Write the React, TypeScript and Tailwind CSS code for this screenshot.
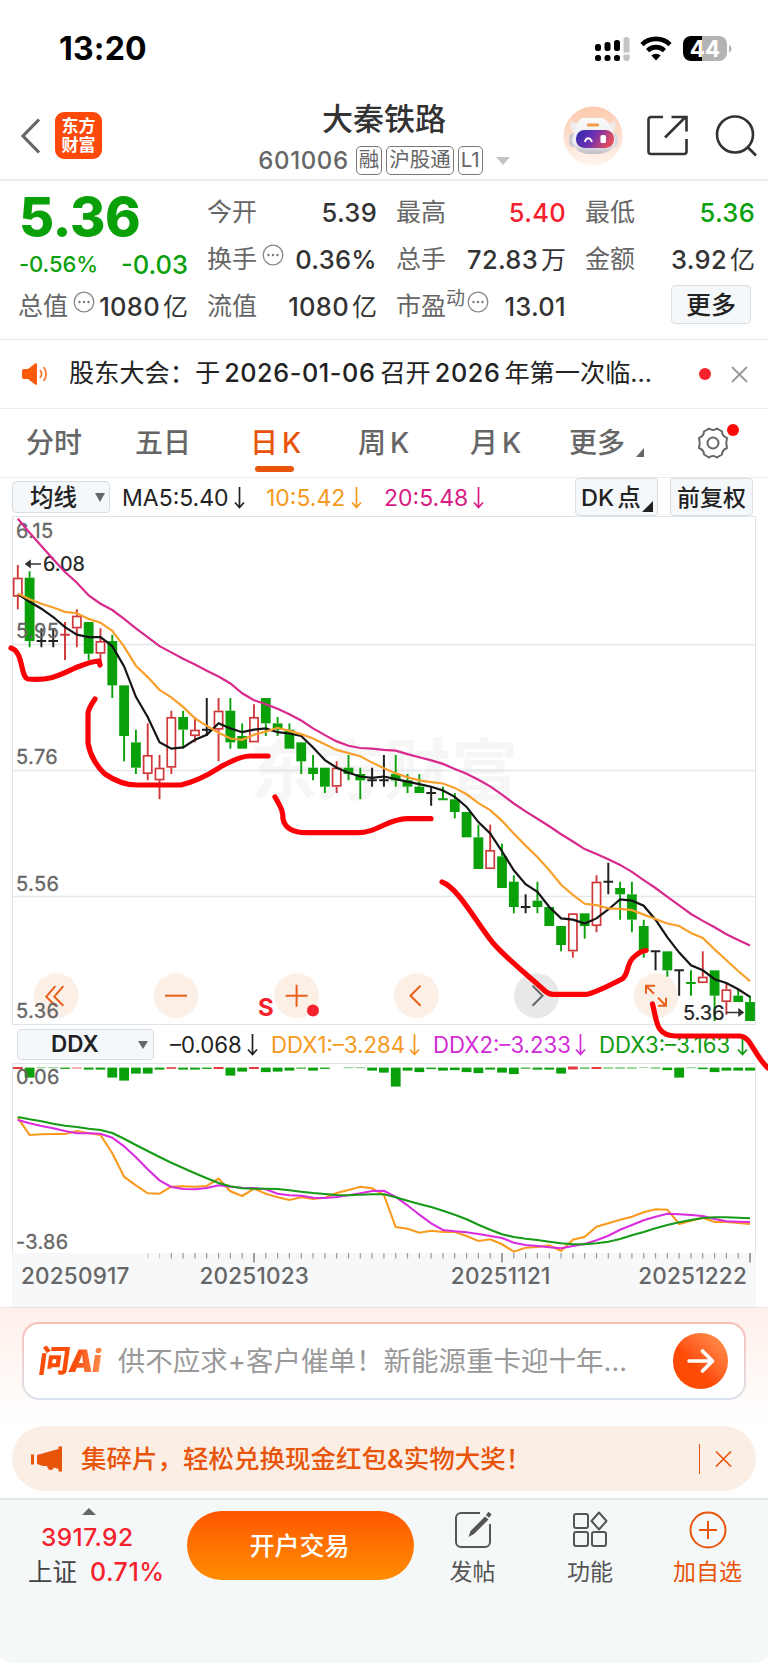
import type { ReactNode } from "react";

// ---------------------------------------------------------------------------
// Data
// ---------------------------------------------------------------------------

type Kind = "up" | "down" | "flat";

// [high, low, body top, body bottom, kind], prices in cents
const CANDLES: [number, number, number, number, Kind][] = [
  [608, 601, 606, 603, "up"], [607, 595, 606, 596, "down"], [598, 595, 596, 596, "flat"],
  [598, 595, 596, 596, "flat"], [599, 593, 597, 597, "up"], [601, 595, 600, 598, "up"],
  [599, 593, 599, 594, "down"], [598, 592, 596, 594, "up"], [597, 587, 596, 589, "down"],
  [589, 577, 589, 581, "down"], [582, 575, 580, 576, "down"], [583, 574, 578, 575, "up"],
  [578, 571, 576, 574, "up"], [585, 575, 584, 576, "up"], [585, 579, 584, 582, "down"],
  [584, 580, 582, 581, "up"], [587, 581, 582, 582, "flat"], [587, 577, 585, 582, "up"],
  [587, 579, 585, 580, "down"], [583, 579, 581, 579, "down"], [586, 580, 584, 580, "up"],
  [587, 581, 587, 583, "down"], [584, 581, 583, 582, "down"], [583, 579, 582, 579, "down"],
  [580, 575, 580, 577, "down"], [578, 574, 576, 575, "down"], [576, 572, 576, 573, "down"],
  [577, 572, 576, 573, "up"], [578, 574, 576, 575, "down"], [576, 571, 575, 574, "down"],
  [576, 573, 574, 574, "flat"], [578, 573, 574, 574, "flat"], [578, 573, 575, 574, "down"],
  [575, 572, 574, 573, "down"], [575, 572, 573, 572, "down"], [573, 570, 572, 572, "flat"],
  [573, 571, 571, 571, "down"], [572, 568, 571, 569, "down"], [569, 565, 569, 565, "down"],
  [567, 560, 565, 560, "down"], [567, 560, 563, 560, "up"], [564, 557, 562, 557, "down"],
  [559, 553, 558, 554, "down"], [556, 553, 554, 554, "flat"], [558, 553, 555, 554, "down"],
  [554, 551, 554, 551, "down"], [551, 547, 551, 548, "down"], [553, 546, 553, 547, "up"],
  [553, 549, 553, 551, "down"], [559, 550, 558, 551, "up"], [561, 556, 558, 558, "flat"],
  [558, 552, 557, 556, "down"], [558, 550, 556, 552, "down"], [552, 546, 551, 547, "down"],
  [547, 544, 547, 547, "flat"], [547, 543, 547, 544, "down"], [544, 540, 544, 544, "flat"],
  [544, 540, 542, 542, "down"], [547, 542, 543, 542, "up"], [544, 536, 544, 540, "down"],
  [542, 537, 541, 539, "up"], [541, 539, 540, 539, "down"], [540, 536, 539, 536, "down"],
];

// Averages for the days whose window starts before the first candle
const MA5_SEED = [603.4, 602.2, 601.1, 599.8];
const MA10_SEED = [603.5, 602.6, 601.9, 601.3, 600.6, 600.4, 599.5, 598.9, 597.6];
const MA20_SEED = [
  615.3, 613.1, 611, 608.9, 606.9, 605.2, 603.2, 601.9, 600.9, 599.5,
  598, 596.6, 595.2, 594.2, 593.2, 592.3, 591.3, 590.4, 589.3,
];

// Positive values are drawn red above the base line
const DDX_BARS = [
  2, -10, -0.5, -0.5, -1.3, 0.8, -2, -2, -10, -13, -6, -6, -2, 1.6, -2, -2, -1.3, 2, -8, -4, 2,
  -4.5, -4, -3, -1, -3, -1.3, 0, -0.5, -0.5, -3, -5, -19, -3, -4.5, -1.5, -3, -2.5, -4.5, -5.5, -2,
  -5, -6.5, -1, -2, -2, -6, 3, -1, 2, -0.8, -0.8, -0.8, -0.4, -0.8, -2.5, -10, -0.5, -1.5, -4.5, -3, -3, -3,
];

const DDX1 = [
  113, 165, 163, 162, 162, 153, 160, 165, 220, 290, 316, 340, 341, 320, 319, 320, 318, 296, 334, 348, 326,
  341, 352, 360, 352, 357, 353, 339, 330, 320, 325, 345, 441, 446, 458, 452, 456, 456, 468, 483, 478, 493,
  515, 503, 501, 496, 513, 479, 470, 440, 430, 419, 410, 397, 388, 389, 432, 422, 413, 426, 426, 429, 432,
];
const DDX2 = [
  120, 130, 138, 145, 153, 160, 160, 161, 173, 199, 232, 268, 301, 321, 327, 328, 324, 316, 320, 323, 324,
  328, 341, 346, 347, 353, 354, 351, 346, 340, 333, 332, 351, 376, 404, 430, 450, 454, 457, 462, 468, 474,
  488, 495, 498, 502, 505, 498, 492, 481, 467, 449, 435, 421, 410, 401, 403, 405, 408, 417, 424, 425, 426,
];
const DDX3 = [
  111, 118, 124, 131, 137, 141, 146, 150, 159, 176, 195, 213, 231, 248, 264, 280, 295, 309, 319, 325, 326,
  326, 327, 331, 335, 339, 342, 345, 346, 344, 343, 343, 352, 362, 372, 381, 392, 404, 418, 434, 449, 463,
  471, 476, 480, 485, 490, 493, 493, 490, 485, 477, 466, 456, 445, 435, 427, 420, 414, 412, 412, 413, 415,
];

const COLORS = { up: "#d0393c", down: "#0aa00a", flat: "#222" };

const xAt = (i: number) => 17.8 + i * 11.81;
const yAt = (cents: number) => 505 - (cents - 536) * 6.333;

const closes = CANDLES.map(([, , top, bottom, kind]) => (kind === "up" ? top : bottom));

function average(span: number, seed: number[]) {
  return closes.map((_, i) =>
    i < span - 1 ? seed[i] : closes.slice(i - span + 1, i + 1).reduce((a, b) => a + b, 0) / span,
  );
}

const toPoints = (values: number[], y: (v: number) => number) =>
  values.map((v, i) => `${xAt(i).toFixed(1)},${y(v).toFixed(1)}`).join(" ");

// ---------------------------------------------------------------------------
// Header
// ---------------------------------------------------------------------------

function StatusBar() {
  return (
    <div className="flex h-[98px] items-center justify-between pl-[59px] pr-[36px]">
      <span className="text-[32px] font-bold leading-none tracking-[0.2px] text-black">13:20</span>
      <svg width="137" height="26" viewBox="0 0 137 26">
        {[0, 9.5, 19, 28.5].map((x, i) => (
          <g key={x} fill={i === 3 ? "#c4c4c4" : "#000"}>
            <rect x={x} y={[8, 6, 4, 1][i]} width="6" height={[7, 9, 11, 22][i]} rx="2.5" />
            <rect x={x} y="19" width="6" height="6" rx="2.5" />
          </g>
        ))}
        <path d="M27 16.500h9v2h-9z" fill="#fff" />
        <g fill="none" stroke="#000" strokeWidth="4.6">
          <path d="M47 8.6a20 20 0 0 1 28 0" />
          <path d="M52.6 14.6a12 12 0 0 1 16.8 0" />
        </g>
        <path d="M61 24.5l-4.6-5a6.6 6.6 0 0 1 9.2 0z" />
        <path d="M96 0h11v25H96a8 8 0 0 1-8-8V8a8 8 0 0 1 8-8z" />
        <path d="M107 0h17a8 8 0 0 1 8 8v9a8 8 0 0 1-8 8h-17z" fill="#b3b3b3" />
        <path d="M134 9a4 4 0 0 1 0 7.5z" fill="#b3b3b3" />
        <text x="110" y="20.5" textAnchor="middle" fontSize="22.500" fontWeight="700" fill="#fff">44</text>
      </svg>
    </div>
  );
}

function Robot() {
  return (
    <svg width="60" height="60" viewBox="0 0 60 60">
      <defs>
        <linearGradient id="halo" x1="0" y1="0" x2="0" y2="1">
          <stop offset="0" stopColor="#fdc9ae" />
          <stop offset="1" stopColor="#fff4ee" />
        </linearGradient>
        <linearGradient id="visor" x1="0" y1="0" x2="1" y2="0.3">
          <stop offset="0" stopColor="#2f2aa8" />
          <stop offset="0.5" stopColor="#6a2fb4" />
          <stop offset="1" stopColor="#e04a60" />
        </linearGradient>
        <linearGradient id="shell" x1="0" y1="0" x2="0" y2="1">
          <stop offset="0" stopColor="#fafafa" />
          <stop offset="0.7" stopColor="#ececef" />
          <stop offset="1" stopColor="#bdbdc6" />
        </linearGradient>
      </defs>
      <circle cx="30" cy="30" r="29.5" fill="url(#halo)" />
      <path d="M8 14q2 4 7 3l3 6-6 5q-6-6-4-14zM52 14q-2 4-7 3l-3 6 6 5q6-6 4-14z" fill="#eeeef1" />
      <rect x="6" y="27" width="9" height="14" rx="4.500" fill="#c9c9d1" />
      <rect x="46" y="27" width="9" height="14" rx="4.500" fill="#d9d9df" />
      <path d="M19 12h21q5 2 8 12l4 10q-1 12-14 13.500-8 1-16 0Q11 46 9 34l3-10q2-9 7-12z" fill="url(#shell)" />
      <rect x="24" y="17.500" width="12" height="3" rx="1" fill="#f39a4c" />
      <rect x="13" y="24" width="38" height="18" rx="8.500" fill="url(#visor)" />
      <path d="M22 36c1-5 5-5 7 0" fill="none" stroke="#fff" strokeWidth="2" />
      <rect x="37.500" y="29" width="5.500" height="8" rx="1.500" fill="#fff" />
    </svg>
  );
}

function Tag({ children }: { children: ReactNode }) {
  return (
    <span className="flex h-[29px] items-center rounded-[5px] border border-[#777] px-[2px] text-[20.500px] leading-none text-[#666]">
      {children}
    </span>
  );
}

function Header() {
  return (
    <header className="grid h-[83px] grid-cols-[237px_1fr_237px] border-b-2 border-[#ebebeb]">
      <div className="flex items-center gap-[14px] pb-[6px] pl-[20px]">
        <svg width="21" height="36" viewBox="0 0 21 36" fill="none" stroke="#666" strokeWidth="3.2">
          <path d="M19 1.500L3 18l16 16.500" />
        </svg>
        <div className="flex h-[47px] w-[47px] flex-col items-center justify-center rounded-[9px] bg-[#fd4a0a] text-[17px] font-bold leading-[19px] text-white">
          <span>东方</span>
          <span>财富</span>
        </div>
      </div>
      <div className="flex flex-col items-center pt-[4px]">
        <h1 className="text-[31px] font-medium leading-[34px] text-[#333]">大秦铁路</h1>
        <div className="mt-[10px] flex items-center gap-[4px]">
          <span className="mr-[3px] text-[24px] font-medium leading-none tracking-[0.6px] text-[#666]">601006</span>
          <Tag>融</Tag>
          <Tag>沪股通</Tag>
          <Tag>L1</Tag>
          <svg className="ml-[9px]" width="14" height="8" viewBox="0 0 14 8">
            <path d="M0 0h14L7 8z" fill="#c4c4c4" />
          </svg>
        </div>
      </div>
      <div className="flex items-center justify-end pb-[6px] pr-[11px]">
        <Robot />
        <svg className="ml-[24px]" width="41" height="41" viewBox="0 0 41 41" fill="none" stroke="#333" strokeWidth="2.600">
          <path d="M16 2H4a2.500 2.500 0 0 0-2.500 2.500v32A2.500 2.500 0 0 0 4 39h33a2.500 2.500 0 0 0 2.500-2.500V24" />
          <path d="M18 22.500L39 1.500M24.500 2h15v14.500" />
        </svg>
        <svg className="ml-[27px]" width="42" height="42" viewBox="0 0 42 42" fill="none" stroke="#333" strokeWidth="2.600">
          <circle cx="20" cy="19.500" r="18" />
          <path d="M32.500 32l8.500 8.500" />
        </svg>
      </div>
    </header>
  );
}

// ---------------------------------------------------------------------------
// Quote
// ---------------------------------------------------------------------------

function Dots() {
  return (
    <svg className="shrink-0 -translate-y-[5px]" width="22" height="22" viewBox="0 0 22 22">
      <circle cx="11" cy="11" r="9.800" fill="none" stroke="#888" strokeWidth="1.300" />
      <g fill="#777">
        <circle cx="6.500" cy="11" r="1.200" />
        <circle cx="11" cy="11" r="1.200" />
        <circle cx="15.500" cy="11" r="1.200" />
      </g>
    </svg>
  );
}

interface StatProps {
  label: string;
  value: string;
  unit?: string;
  color?: string;
  hint?: ReactNode;
}

function Stat({ label, value, unit, color = "text-[#333]", hint }: StatProps) {
  return (
    <div className="flex h-[47px] items-center whitespace-nowrap text-[25px] leading-none">
      <span className="-ml-px text-[#666]">{label}</span>
      {hint}
      <span className={`ml-auto text-[25.500px] font-medium ${color}`}>
        <span className="tracking-[0.300px]">{value}</span>
        {unit && <span className="ml-[3px] text-[25px] font-normal">{unit}</span>}
      </span>
    </div>
  );
}

function Quote() {
  return (
    <section className="grid h-[159px] grid-cols-4 gap-x-[20px] border-b border-[#e8e8e8] pl-[19px] pr-[13px] pt-[8px]">
      <div className="text-[#0aa00a]">
        <div className="flex h-[55px] items-center text-[54px] font-extrabold leading-none tracking-[-0.500px]">5.36</div>
        <div className="flex h-[39px] items-center justify-between leading-none">
          <span className="text-[22px] font-medium tracking-[-0.100px]">-0.56%</span>
          <span className="mt-[3px] text-[25.500px] font-medium">-0.03</span>
        </div>
        <Stat label="总值" value="1080" unit="亿" hint={<span className="ml-[5px]"><Dots /></span>} />
      </div>
      <div>
        <Stat label="今开" value="5.39" />
        <Stat label="换手" value="0.36%" hint={<span className="ml-[5px]"><Dots /></span>} />
        <Stat label="流值" value="1080" unit="亿" />
      </div>
      <div>
        <Stat label="最高" value="5.40" color="text-[#f5222d]" />
        <Stat label="总手" value="72.83" unit="万" />
        <Stat
          label="市盈"
          value="13.01"
          hint={
            <>
              <span className="-mt-[16px] text-[19px] text-[#666]">动</span>
              <span className="ml-[2px]"><Dots /></span>
            </>
          }
        />
      </div>
      <div>
        <Stat label="最低" value="5.36" color="text-[#0aa00a]" />
        <Stat label="金额" value="3.92" unit="亿" />
        <button className="ml-auto mr-[4px] mt-[2px] flex h-[39px] w-[80px] items-center justify-center rounded-[4px] border border-[#d9dee2] bg-[#f5f8fa] pt-[2px] text-[25px] font-medium leading-none text-[#222]">
          更多
        </button>
      </div>
    </section>
  );
}

function Notice() {
  return (
    <section className="flex h-[69px] items-center whitespace-nowrap border-b border-[#ececec] pl-[21px] pr-[20px]">
      <svg width="28" height="24" viewBox="0 0 28 24" fill="#fa5a0a">
        <path d="M3 7h4l7-5.500c1-.6 2-.2 2 1v19c0 1.200-1 1.600-2 1L7 17H3c-1.300 0-2-.7-2-2V9c0-1.300.7-2 2-2z" />
        <path d="M19 8c2 2.500 2 5.500 0 8M22.500 5c3.500 4 3.500 10 0 14" fill="none" stroke="#fa7a3a" strokeWidth="1.800" />
      </svg>
      <p className="ml-[20px] text-[25.200px] leading-none text-[#222]">
        股东大会：于<b className="ml-[4px] mr-[5px] font-medium tracking-[0.600px]">2026-01-06</b>召开
        <b className="ml-[4px] mr-[4px] font-medium tracking-[0.600px]">2026</b>年第一次临...
      </p>
      <span className="ml-auto h-[12px] w-[12px] rounded-full bg-[#f5222d]" />
      <svg className="ml-[20px]" width="17" height="17" viewBox="0 0 17 17" stroke="#999" strokeWidth="1.800">
        <path d="M1 1l15 15M16 1L1 16" />
      </svg>
    </section>
  );
}

// ---------------------------------------------------------------------------
// Tabs
// ---------------------------------------------------------------------------

function Tabs() {
  return (
    <nav className="flex h-[69px] items-center whitespace-nowrap border-b border-[#ececec] pl-[26px] text-[28px] font-medium leading-none text-[#666]">
      <span className="w-[109px]">分时</span>
      <span className="w-[115px]">五日</span>
      <span className="relative w-[108px] text-[#e8550a]">
        日<span className="ml-[4px]">K</span>
        <i className="absolute left-[5px] top-[37px] h-[6px] w-[39px] rounded-full bg-[#e8550a]" />
      </span>
      <span className="w-[112px]">周<span className="ml-[4px]">K</span></span>
      <span className="w-[99px]">月<span className="ml-[4px]">K</span></span>
      <span>更多</span>
      <svg className="ml-[11px] mt-[18px]" width="8" height="9" viewBox="0 0 8 9">
        <path d="M8 0v9H0z" fill="#666" />
      </svg>
      <span className="relative ml-[52px]">
        <svg width="34" height="34" viewBox="0 0 34 34" fill="none" stroke="#666" strokeWidth="2">
          <path d="M13 2.500Q17 5.500 21 2.500L26 5.500Q26 10 31 12Q29.500 17 31 22Q26 24 26 28.500L21 31.500Q17 28.500 13 31.500L8 28.500Q8 24 3 22Q4.500 17 3 12Q8 10 8 5.500Z" strokeLinejoin="round" />
          <circle cx="17" cy="17" r="5.500" />
        </svg>
        <i className="absolute -top-[2px] left-[31px] h-[12px] w-[12px] rounded-full bg-[#fb0a0a]" />
      </span>
    </nav>
  );
}

// ---------------------------------------------------------------------------
// Charts
// ---------------------------------------------------------------------------

function DownArrow() {
  return (
    <svg width="11" height="22" viewBox="0 0 11 22" fill="none" stroke="currentColor" strokeWidth="1.700">
      <path d="M5.500 0v20M1 15.500l4.500 5 4.500-5" />
    </svg>
  );
}

function Reading({ text, className }: { text: string; className: string }) {
  return (
    <span className={`flex items-center justify-between pt-[2px] leading-none ${className}`}>
      {text}
      <DownArrow />
    </span>
  );
}

function AverageBar() {
  return (
    <div className="flex h-[38px] items-center whitespace-nowrap pl-[12px] pr-[15px] text-[23.500px]">
      <button className="flex h-[32px] w-[98px] items-center rounded-[4px] border border-[#d9dee2] bg-[#f5f8fa] pl-[17px] pt-[2px] font-medium leading-none text-[#222]">
        均线
        <svg className="-mt-[2px] ml-[18px]" width="10" height="9" viewBox="0 0 10 9">
          <path d="M0 0h10L5 9z" fill="#666" />
        </svg>
      </button>
      <Reading className="ml-[12px] w-[123px] text-[23px] text-[#222]" text="MA5:5.40" />
      <Reading className="ml-[21px] w-[96px] text-[23px] text-[#f5991f]" text="10:5.42" />
      <Reading className="ml-[22px] w-[100px] text-[23px] text-[#d81b84]" text="20:5.48" />
      <button className="relative ml-auto flex h-[38px] w-[83px] items-center rounded-[4px] border border-[#d9dee2] bg-[#f5f8fa] pl-[5px] pt-[2px] font-medium leading-none text-[#222]">
        DK<span className="ml-[3px]">点</span>
        <svg className="absolute bottom-[3px] right-[4px]" width="11" height="11" viewBox="0 0 11 11">
          <path d="M11 0v11H0z" fill="#222" />
        </svg>
      </button>
      <button className="ml-[12px] h-[38px] w-[83px] rounded-[4px] border border-[#d9dee2] bg-[#f5f8fa] pt-[2px] text-[23px] font-medium leading-none text-[#222]">
        前复权
      </button>
    </div>
  );
}

function Candle({ index }: { index: number }) {
  const [high, low, top, bottom, kind] = CANDLES[index];
  const x = xAt(index);
  const color = COLORS[kind];
  if (top === bottom) {
    return (
      <path
        d={`M${x} ${yAt(high)}V${yAt(low)}M${x - 4.800} ${yAt(top)}h9.600`}
        stroke={color}
        strokeWidth="2"
      />
    );
  }
  const inset = kind === "up" ? 0.8 : 0;
  return (
    <g stroke={color} strokeWidth="1.900">
      <path d={`M${x} ${yAt(high)}V${yAt(top)}M${x} ${yAt(bottom)}V${yAt(low)}`} />
      <rect
        x={x - 4.900 + inset}
        y={yAt(top) + inset}
        width={9.800 - inset * 2}
        height={yAt(bottom) - yAt(top) - inset * 2}
        strokeWidth={kind === "up" ? 1.700 : 0}
        fill={kind === "up" ? "#fff" : color}
      />
    </g>
  );
}

function RoundButton({ x, gray, children }: { x: number; gray?: boolean; children: ReactNode }) {
  return (
    <g transform={`translate(${x} 479.700)`}>
      <circle r="22.500" fill={gray ? "#e8e8e8" : "#fcefe6"} />
      <g fill="none" stroke={gray ? "#666" : "#e8601c"} strokeWidth="2">{children}</g>
    </g>
  );
}

function PriceChart() {
  return (
    <svg className="block" width="768" height="509" viewBox="0 0 768 509">
      <path d="M12.500 509V.5h743V509M12.500 508.500h743" fill="none" stroke="#dfe2e8" />
      <path d="M12.500 128.500h743M12.500 254.500h743M12.500 380.500h743" stroke="#e4e7ee" strokeWidth="1.500" />
      <text x="250" y="279" fontSize="67" fontWeight="700" fill="#d8d8d8" fillOpacity="0.220">东方财富</text>

      <RoundButton x={56.300}><path d="M-1-9.500L-10 1-1 10M7-9.500L-2 1 7 10" /></RoundButton>
      <RoundButton x={176}><path d="M-11 0H11" /></RoundButton>
      <RoundButton x={296.600}><path d="M-11 0H11M0-11V11" /></RoundButton>
      <RoundButton x={416.500}><path d="M4-10L-6 0 4 10" /></RoundButton>
      <RoundButton x={536.500} gray><path d="M-4-10L6 0-4 10" /></RoundButton>
      <RoundButton x={656}><path d="M-10-2v-8h9M-10-10L-2-2M10 2v8H2M10 10L2 2" /></RoundButton>
      <text x="258" y="500" fontSize="24" fontWeight="700" fill="#f5222d">S</text>
      <circle cx="313" cy="494.500" r="6" fill="#f5222d" />

      {CANDLES.map((_, i) => (
        <Candle key={i} index={i} />
      ))}

      <g fontSize="20" letterSpacing="0.400" fill="#666" stroke="#666" strokeWidth="0.300">
        <text x="16" y="21.500">6.15</text>
        <text x="16" y="121.500">5.95</text>
        <text x="16" y="248">5.76</text>
        <text x="16" y="375">5.56</text>
        <text x="16" y="501.500">5.36</text>
      </g>
      <g fontSize="20" fill="#222" stroke="#222" strokeWidth="0.200">
        <text x="43" y="55">6.08</text>
        <text x="683" y="504">5.36</text>
      </g>
      <g stroke="#333" strokeWidth="1.600" fill="#333">
        <path d="M41 48H27M30 45l-4 3 4 3z" />
        <path d="M726 496.500h15M739 493.500l4 3-4 3z" />
      </g>

      <g fill="none" strokeWidth="2.200">
        <polyline points={toPoints(average(20, MA20_SEED), yAt)} stroke="#d8298c" />
        <polyline points={toPoints(average(5, MA5_SEED), yAt)} stroke="#151515" />
        <polyline points={toPoints(average(10, MA10_SEED), yAt)} stroke="#f9a02c" />
      </g>
    </svg>
  );
}

function DdxBar() {
  return (
    <div className="flex h-[38px] items-center whitespace-nowrap pl-[17px] text-[22.200px]">
      <button className="mt-px flex h-[31px] w-[137px] items-center rounded-[4px] border border-[#d9dee2] bg-[#f5f8fa] pl-[33px] text-[22.500px] font-semibold leading-none text-[#222]">
        DDX
        <svg className="ml-auto mr-[5px]" width="10" height="8" viewBox="0 0 10 8">
          <path d="M0 0h10L5 8z" fill="#666" />
        </svg>
      </button>
      <Reading className="ml-[16px] w-[88px] text-[#222]" text="–0.068" />
      <Reading className="ml-[13px] w-[149px] text-[#f5991f]" text="DDX1:–3.284" />
      <Reading className="ml-[13px] w-[153px] text-[#d22cd8]" text="DDX2:–3.233" />
      <Reading className="ml-[13px] w-[149px] text-[#0f9a0f]" text="DDX3:–3.163" />
    </div>
  );
}

function DdxChart() {
  const y = (v: number) => 17 + v / 3;
  return (
    <svg className="block" width="768" height="190" viewBox="0 0 768 190">
      <path d="M12.500 190V.5h743V190" fill="none" stroke="#dfe2e8" />
      {DDX_BARS.map((v, i) => (
        <rect
          key={i}
          x={xAt(i) - 4.900}
          y={v > 0 ? 5 - v / 2 : 4.600}
          width="9.800"
          height={Math.abs(v)}
          fill={v > 0 ? "#e23b3e" : COLORS.down}
        />
      ))}
      <g fontSize="20" letterSpacing="0.300" fill="#666" stroke="#666" strokeWidth="0.300">
        <text x="16" y="20.500">0.06</text>
        <text x="16" y="186">-3.86</text>
      </g>
      <g fill="none" strokeWidth="2.100">
        <polyline points={toPoints(DDX1, y)} stroke="#f99a1f" />
        <polyline points={toPoints(DDX2, y)} stroke="#d92ce0" />
        <polyline points={toPoints(DDX3, y)} stroke="#179a17" />
      </g>
    </svg>
  );
}

function TimeAxis() {
  return (
    <div className="mx-[12px] h-[54px] bg-[#f7f8fa]">
      <svg className="block" width="744" height="10" viewBox="12 0 744 10">
        {CANDLES.map((_, i) => {
          if (i < 11) return null;
          const major = i === 20 || i === 41 || i === 62;
          return (
            <path
              key={i}
              d={`M${xAt(i)} 0v${major ? 9.5 : 5.5}`}
              stroke={i < 13 ? "#d0d0d4" : major ? "#888" : "#999"}
              strokeWidth={major ? 1.6 : 1.2}
            />
          );
        })}
      </svg>
      <div className="flex justify-between pl-[9px] pr-[9px] text-[22.500px] font-medium leading-[26px] tracking-[0.200px] text-[#666]">
        <span className="w-[178px]">20250917</span>
        <span className="w-[251px]">20251023</span>
        <span className="w-[187px]">20251121</span>
        <span>20251222</span>
      </div>
    </div>
  );
}

function Charts() {
  return (
    <section className="relative border-b border-[#e4e4e4]">
      <AverageBar />
      <PriceChart />
      <DdxBar />
      <DdxChart />
      <TimeAxis />
      {/* Hand-drawn marks over both charts */}
      <svg
        className="pointer-events-none absolute left-0 top-0"
        width="768"
        height="600"
        viewBox="0 478 768 600"
        fill="none"
        stroke="#fb0007"
        strokeWidth="5.200"
        strokeLinecap="round"
        strokeLinejoin="round"
      >
        <path d="M11 648C24 652 20 677 28 679C50 681 60 675 75 668C85 664 92 661 99 661L100 665" />
        <path d="M95 699Q88 709 88 714V743C90 756 98 768 105 774C118 783 128 785 137 785H181C205 779 215 770 222 766C235 759 245 756 250 756H268" />
        <path d="M275 797C282 809 283 812 283 819C285 829 295 832.700 307 832.700H357C377 833 387 819 407 818.700H431" />
        <path d="M442 882C458 888 474 919 493 943C508 960 530 977 545 991Q549 994.300 553 994.300H587C597 992 610 985 622 979C629 975 626 963 634 957Q640 951 646 950.500" />
        <path d="M652.500 1004C657 1020 655 1036 676 1036H740C751 1036.500 753 1054 768 1068" />
      </svg>
    </section>
  );
}

// ---------------------------------------------------------------------------
// Bottom
// ---------------------------------------------------------------------------

function AskAi() {
  return (
    <section className="bg-linear-to-b from-[#fff0ea] to-white px-[22px] pb-[26px] pt-[14px]">
      <div className="rounded-[17px] bg-linear-to-b from-[#f9c0b4] to-[#dbe2f0] p-[2px]">
        <div className="flex h-[74px] items-center rounded-[15px] bg-white pl-[15px] pr-[16px]">
          <span className="-skew-x-8 whitespace-nowrap bg-linear-to-r from-[#fa4d0a] from-60% to-[#fd8a48] bg-clip-text text-[31px] font-black leading-[40px] tracking-[-1px] text-transparent">
            问Ai
          </span>
          <span className="ml-[17px] whitespace-nowrap pt-[2px] text-[27.500px] leading-none text-[#999]">
            供不应求+客户催单！新能源重卡迎十年...
          </span>
          <span className="ml-auto flex h-[56px] w-[55px] shrink-0 items-center justify-center rounded-full bg-linear-to-tr from-[#fd4a05] from-40% to-[#ff9650]">
            <svg width="30" height="26" viewBox="0 0 30 26" fill="none" stroke="#fff" strokeWidth="3.600" strokeLinecap="round" strokeLinejoin="round">
              <path d="M3 13h23M16.500 3l10 10-10 10" />
            </svg>
          </span>
        </div>
      </div>
    </section>
  );
}

function Promo() {
  return (
    <div className="mx-[12px] mb-[7px] flex h-[65px] items-center whitespace-nowrap rounded-full bg-[#faeee5] pl-[19px] pr-[24px] text-[#e8550a]">
      <svg width="32" height="26" viewBox="0 0 32 26" fill="#e8550a">
        <rect x="0" y="8.500" width="3" height="10" />
        <path d="M6 9L27.500 3V.5H31v25h-3.500V23L23 21.500q-1 2.500-3.500 2.500T16 20h-4l-6-2z" />
      </svg>
      <span className="ml-[18px] text-[25.500px] font-medium leading-none">集碎片，轻松兑换现金红包&amp;实物大奖！</span>
      <i className="ml-auto h-[30px] w-px bg-[#e8550a]" />
      <svg className="ml-[15px]" width="17" height="16" viewBox="0 0 17 16" stroke="#e8550a" strokeWidth="1.600">
        <path d="M1 .5l15 15M16 .5l-15 15" />
      </svg>
    </div>
  );
}

function NavItem({ label, className, children }: { label: string; className: string; children: ReactNode }) {
  return (
    <div className={`flex flex-col items-center pt-[11px] ${className}`}>
      <svg width="38" height="38" viewBox="0 0 38 38" fill="none" stroke="currentColor" strokeWidth="2">
        {children}
      </svg>
      <span className="mt-[10px] whitespace-nowrap text-[23px] leading-[26px]">{label}</span>
    </div>
  );
}

function BottomNav() {
  return (
    <footer className="h-[165px] rounded-b-[12px] border-t-2 border-[#e3e6e8] bg-[#f5f8f9]">
      <div className="flex">
        <div className="flex w-[187px] flex-col pl-[28px] leading-none text-[#f5222d]">
          <svg className="ml-[54px] mt-[8px]" width="14" height="7" viewBox="0 0 14 7">
            <path d="M7 0l7 7H0z" fill="#666" />
          </svg>
          <span className="ml-[13px] mt-[10px] text-[24.500px] font-medium tracking-[0.400px]">3917.92</span>
          <span className="mt-[10px] flex items-center gap-[13px] text-[25px] font-medium tracking-[0.500px]">
            <span className="text-[24.500px] font-normal tracking-normal text-[#444]">上证</span>0.71%
          </span>
        </div>
        <button className="mt-[11px] h-[69px] w-[227px] rounded-full bg-linear-to-b from-[#ff5500] to-[#ff8c00] pr-[2px] pt-[2px] text-[25px] font-medium text-white">
          开户交易
        </button>
        <NavItem label="发帖" className="ml-[13px] w-[91px] text-[#555]">
          <path d="M26 2H7a5 5 0 0 0-5 5v24a5 5 0 0 0 5 5h24a5 5 0 0 0 5-5V13" />
          <path d="M14.500 26l2-6L31 5.500l3.500 3L20 23z" fill="currentColor" stroke="none" />
          <path d="M33.500 5.500l2.500-3.500" strokeWidth="4" />
        </NavItem>
        <NavItem label="功能" className="ml-[26px] w-[92px] text-[#555]">
          <rect x="3" y="3" width="14" height="14" rx="2" />
          <rect x="3" y="21" width="14" height="14" rx="2" />
          <rect x="21" y="21" width="14" height="14" rx="2" />
          <path d="M28 1.500l7.500 8.500-7.500 8.500-7.500-8.500z" strokeLinejoin="round" />
        </NavItem>
        <NavItem label="加自选" className="ml-[26px] w-[91px] text-[#e8550a]">
          <circle cx="19" cy="19" r="17.500" />
          <path d="M10 19h18M19 10v18" />
        </NavItem>
      </div>
    </footer>
  );
}

export default function App() {
  return (
    <main className="h-[1663px] w-[768px] overflow-hidden bg-white font-['Inter','Noto_Sans_CJK_SC',sans-serif]">
      <StatusBar />
      <Header />
      <Quote />
      <Notice />
      <Tabs />
      <Charts />
      <AskAi />
      <Promo />
      <BottomNav />
    </main>
  );
}
